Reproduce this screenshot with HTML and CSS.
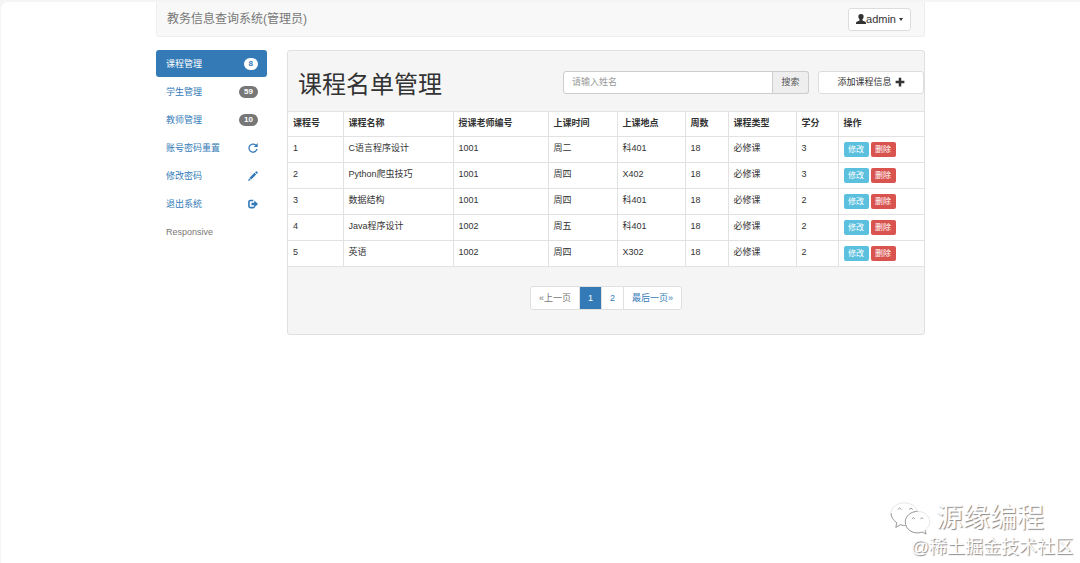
FILE: index.html
```html
<!DOCTYPE html>
<html lang="zh-CN">
    <head>
        <meta charset="utf-8">
        <title>教务信息查询系统</title>
        <link rel="stylesheet" href="styles.css">
    </head>
    <body>
        <svg class="symbols" width="0" height="0">
            <symbol id="user" viewBox="0 0 16 16"><path d="M8 0C5 0 3.600 1.800 3.800 4.300c.1 1.800.8 3.500 2 4.500v1.200c-.3.7-1.300 1.100-2.800 1.500C1 12.100 0 12.800 0 14.500V16h16v-1.500c0-1.700-1-2.400-3-3-1.500-.4-2.500-.8-2.800-1.500V8.800c1.200-1 1.900-2.700 2-4.500C12.400 1.800 11 0 8 0z"/></symbol>
            <symbol id="plus" viewBox="0 0 16 16"><path d="M6 1h4v5h5v4h-5v5H6v-5H1V6h5z"/></symbol>
            <symbol id="repeat" viewBox="0 0 16 16"><path d="M14.500 9.500A6.500 6.500 0 1 1 12.500 3.300" fill="none" stroke="currentColor" stroke-width="2"/><path d="M15.500 0v6.500H9z"/></symbol>
            <symbol id="pencil" viewBox="0 0 16 16"><path d="M12.600.6c.4-.4 1-.4 1.400 0l1.400 1.400c.4.4.4 1 0 1.400L14 4.800 11.200 2zM10.300 2.900l2.800 2.800-7.900 7.900-2.800-2.800zM1.700 11.600l2.700 2.700L0 16z"/></symbol>
            <symbol id="logout" viewBox="0 0 16 16"><path d="M8.500 2.300H4a2.500 2.500 0 0 0-2.500 2.500v6.400A2.500 2.500 0 0 0 4 13.700h4.500a2 2 0 0 0 2-1.700" fill="none" stroke="currentColor" stroke-width="2.600"/><path d="M10 2.500L16 8l-6 5.500V10H5.500V6H10z"/></symbol>
        </svg>

        <div class="page">
            <div class="container">
                <header class="navbar">
                    <a class="brand" href="#">教务信息查询系统(管理员)</a>
                    <button class="btn user-button"><svg class="user-icon"><use href="#user"/></svg>admin<span class="caret"></span></button>
                </header>

                <div class="content">
                    <nav class="sidebar">
                        <a class="side-link active" href="#">课程管理<span class="badge">8</span></a>
                        <a class="side-link" href="#">学生管理<span class="badge">59</span></a>
                        <a class="side-link" href="#">教师管理<span class="badge">10</span></a>
                        <a class="side-link" href="#">账号密码重置<svg class="icon"><use href="#repeat"/></svg></a>
                        <a class="side-link" href="#">修改密码<svg class="icon"><use href="#pencil"/></svg></a>
                        <a class="side-link" href="#">退出系统<svg class="icon"><use href="#logout"/></svg></a>
                        <a class="side-link disabled" href="#">Responsive</a>
                    </nav>

                    <main class="panel">
                        <div class="panel-heading">
                            <h1 class="title">课程名单管理</h1>
                            <form class="search">
                                <input class="search-input" type="text" placeholder="请输入姓名" aria-label="姓名">
                                <button class="search-button" type="button">搜索</button>
                            </form>
                            <button class="btn add-button">添加课程信息<svg class="icon"><use href="#plus"/></svg></button>
                        </div>

                        <table class="table">
                            <thead>
                                <tr>
                                    <th class="col-id">课程号</th>
                                    <th class="col-name">课程名称</th>
                                    <th class="col-teacher">授课老师编号</th>
                                    <th class="col-time">上课时间</th>
                                    <th class="col-place">上课地点</th>
                                    <th class="col-weeks">周数</th>
                                    <th class="col-type">课程类型</th>
                                    <th class="col-credit">学分</th>
                                    <th>操作</th>
                                </tr>
                            </thead>
                            <tbody>
                                <tr>
                                    <td>1</td><td>C语言程序设计</td><td>1001</td><td>周二</td><td>科401</td><td>18</td><td>必修课</td><td>3</td>
                                    <td><div class="actions"><button class="btn-xs edit">修改</button><button class="btn-xs delete">删除</button></div></td>
                                </tr>
                                <tr>
                                    <td>2</td><td>Python爬虫技巧</td><td>1001</td><td>周四</td><td>X402</td><td>18</td><td>必修课</td><td>3</td>
                                    <td><div class="actions"><button class="btn-xs edit">修改</button><button class="btn-xs delete">删除</button></div></td>
                                </tr>
                                <tr>
                                    <td>3</td><td>数据结构</td><td>1001</td><td>周四</td><td>科401</td><td>18</td><td>必修课</td><td>2</td>
                                    <td><div class="actions"><button class="btn-xs edit">修改</button><button class="btn-xs delete">删除</button></div></td>
                                </tr>
                                <tr>
                                    <td>4</td><td>Java程序设计</td><td>1002</td><td>周五</td><td>科401</td><td>18</td><td>必修课</td><td>2</td>
                                    <td><div class="actions"><button class="btn-xs edit">修改</button><button class="btn-xs delete">删除</button></div></td>
                                </tr>
                                <tr>
                                    <td>5</td><td>英语</td><td>1002</td><td>周四</td><td>X302</td><td>18</td><td>必修课</td><td>2</td>
                                    <td><div class="actions"><button class="btn-xs edit">修改</button><button class="btn-xs delete">删除</button></div></td>
                                </tr>
                            </tbody>
                        </table>

                        <div class="panel-footer">
                            <div class="pagination">
                                <a class="page-link off" href="#">«上一页</a>
                                <a class="page-link current" href="#">1</a>
                                <a class="page-link" href="#">2</a>
                                <a class="page-link" href="#">最后一页»</a>
                            </div>
                        </div>
                    </main>
                </div>
            </div>
        </div>

        <div class="watermark">
            <div class="mark-top">
                <svg class="wechat" viewBox="0 0 44 36">
                    <path class="faint" d="M18 26c-2 0-4 0-6-1l-5 3 1-5C4 20 2 17 2 13 2 6 9 2 16 2c7 0 13 4 14 9"/>
                    <path d="M2 13c0 4 2 7 6 10l-1 5 5-3c2 1 4 1 6 1"/>
                    <path class="faint" d="M30 11c7 0 13 5 13 11 0 4-2 6-5 9l1 4-4-2c-10 3-18-3-18-11 0-6 6-11 13-11z"/>
                    <path d="M30 11c-7 0-13 5-13 11 0 8 8 14 18 11l4 2-1-4"/>
                    <path d="M9 9q2-3 4 0M21 9q2-3 4 0M24 19q2-3 3 0M33 19q2-3 3 0"/>
                </svg>
                <span class="mark-name">源缘编程</span>
            </div>
            <div class="mark-site">@稀土掘金技术社区</div>
        </div>
    </body>
</html>
```

FILE: styles.css
```css
*{
    box-sizing:border-box;
}

body{
    margin:0;
    background-color:#f5f5f5;
    color:#333;
    font-family:"Liberation Sans", "Noto Sans CJK SC", sans-serif;
    font-size:9px;
    line-height:14px;
}

a{
    color:#337ab7;
    text-decoration:none;
}

button, input{
    margin:0;
    font:inherit;
    color:inherit;
}

.symbols{
    position:absolute;
}

.icon, .user-icon{
    fill:currentColor;
}

.icon{
    width:10px;
    height:10px;
}

.page{
    min-height:100vh;
    border:solid #f5f5f5;
    border-width:2px 0 0 1px;
    border-radius:8px 0 0 0;
    background-color:white;
}

.container{
    max-width:769px;
    margin:0 auto;
}

.navbar{
    display:flex;
    align-items:center;
    justify-content:space-between;
    height:35px;
    padding:0 13px 0 10px;
    border:1px solid #eee;
    border-top:none;
    border-radius:0 0 3px 3px;
    background-color:#f8f8f8;
}

.brand{
    color:#777;
    font-size:12px;
}

.btn{
    display:flex;
    align-items:center;
    justify-content:center;
    height:23px;
    border:1px solid #ddd;
    border-radius:3px;
    background-color:white;
    cursor:pointer;
}

.user-button{
    padding:0 7px;
    font-size:11px;
}

.user-icon{
    width:10px;
    height:10px;
}

.caret{
    margin-left:3px;
    border:2px solid transparent;
    border-top:3px solid #333;
    border-bottom:none;
}

.content{
    display:flex;
    align-items:flex-start;
    gap:20px;
    margin-top:13px;
}

.sidebar{
    display:flex;
    flex-direction:column;
    gap:1px;
    width:111px;
}

.side-link{
    display:flex;
    align-items:center;
    justify-content:space-between;
    height:27px;
    padding:0 9px 0 10px;
    border-radius:3px;
}

.side-link.active{
    background-color:#337ab7;
    color:white;
}

.side-link.disabled{
    color:#777;
}

.badge{
    padding:0 5px;
    border-radius:6px;
    background-color:#777;
    color:white;
    font-size:8px;
    font-weight:bold;
    line-height:12px;
}

.active .badge{
    background-color:white;
    color:#337ab7;
}

.panel{
    flex:1;
    border:1px solid #e0e0e0;
    border-radius:3px;
    background-color:#f5f5f5;
}

.panel-heading{
    display:flex;
    align-items:center;
    height:60px;
    padding:2px 0 0 10px;
}

.title{
    flex:1;
    margin:0;
    padding-top:5px;
    font-size:24px;
    font-weight:normal;
    line-height:30px;
}

.search{
    display:flex;
    width:246px;
    height:23px;
    margin-right:9px;
}

.search-input{
    flex:1;
    min-width:0;
    padding:0 8px;
    border:1px solid #ccc;
    border-radius:3px 0 0 3px;
    background-color:white;
}

.search-input::placeholder{
    color:#999;
}

.search-button{
    width:36px;
    padding:0;
    border:1px solid #ccc;
    border-left:none;
    border-radius:0 3px 3px 0;
    background-color:#eee;
    color:#555;
}

.add-button{
    gap:3px;
    width:106px;
    padding:0;
}

.table{
    width:100%;
    border-collapse:collapse;
    table-layout:fixed;
    background-color:white;
}

.table th, .table td{
    height:26px;
    padding:4px 5px 0;
    border:1px solid #e2e2e2;
    text-align:left;
    vertical-align:top;
}

.table th{
    height:25px;
}

.table th:first-child, .table td:first-child{
    border-left:none;
}

.table th:last-child, .table td:last-child{
    border-right:none;
}

.col-id{ width:55px; }
.col-name{ width:110px; }
.col-teacher{ width:95px; }
.col-time{ width:69px; }
.col-place{ width:68px; }
.col-weeks{ width:43px; }
.col-type{ width:68px; }
.col-credit{ width:42px; }

.actions{
    display:flex;
    gap:2px;
    padding-top:1px;
}

.btn-xs{
    width:25px;
    height:15px;
    padding:0;
    border:none;
    border-radius:2px;
    color:white;
    font-size:8px;
    line-height:15px;
}

.edit{
    background-color:#5bc0de;
}

.delete{
    background-color:#d9534f;
}

.panel-footer{
    display:flex;
    justify-content:center;
    padding:19px 0 24px;
}

.pagination{
    display:flex;
    border:1px solid #e0e0e0;
    border-radius:3px;
    background-color:white;
}

.page-link{
    padding:4px 8px;
    border-right:1px solid #e0e0e0;
}

.page-link:last-child{
    border-right:none;
}

.page-link.off{
    color:#777;
}

.page-link.current{
    background-color:#337ab7;
    color:white;
}

.watermark{
    position:absolute;
    right:7px;
    bottom:4px;
    color:white;
    text-shadow:1px 1px 1px #888;
}

.mark-top{
    display:flex;
    align-items:center;
    justify-content:flex-end;
    gap:5px;
    margin-right:29px;
}

.wechat{
    width:42px;
    height:34px;
    fill:none;
    stroke:#999;
}

.wechat .faint{
    fill:white;
    stroke:#e4e4e4;
}

.mark-name{
    font-size:27px;
    line-height:34px;
}

.mark-site{
    font-size:18px;
    line-height:24px;
    text-align:right;
}
```
